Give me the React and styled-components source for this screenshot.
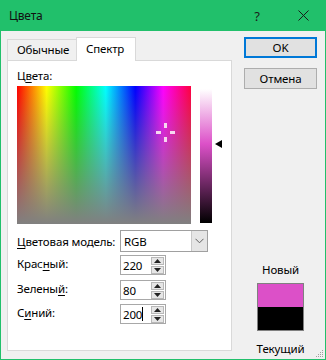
import styled, { createGlobalStyle } from "styled-components";

const GlobalStyle = createGlobalStyle`
  html, body {
    margin: 0;
    padding: 0;
    overflow: hidden;
  }
  * {
    box-sizing: border-box;
  }
`;

const ACCENT = "#21c06b";
const FONTE = `"Segoe UI", "Noto Sans", sans-serif`;
const COR = { r: 220, g: 80, b: 200 };
const corCss = `rgb(${COR.r}, ${COR.g}, ${COR.b})`;

function App() {
  // posição do marcador de luminância (0 = topo)
  const lum = (Math.max(COR.r, COR.g, COR.b) + Math.min(COR.r, COR.g, COR.b)) / 2 / 255;
  const lumTop = Math.round((1 - lum) * 134) - 4;

  return (
    <>
      <GlobalStyle />
      <Janela>
        <BarraTitulo>
          <Titulo>Цвета</Titulo>
          <BotaoTitulo>?</BotaoTitulo>
          <BotaoTitulo>
            <svg width="11" height="11" viewBox="0 0 11 11">
              <path d="M0.5 0.5 L10.5 10.5 M10.5 0.5 L0.5 10.5" stroke="#1a1a1a" strokeWidth="1" fill="none" />
            </svg>
          </BotaoTitulo>
        </BarraTitulo>
        <Corpo>
          <ColunaEsquerda>
            <Abas>
              <Aba>Обычные</Aba>
              <Aba $ativa>Спектр</Aba>
            </Abas>
            <Painel>
              <Rotulo>Ц<u>в</u>ета:</Rotulo>
              <Seletor>
                <Espectro>
                  <Mira width="19" height="19" viewBox="0 0 19 19">
                    <g fill="#f6d8f0">
                      <rect x="8" y="0" width="3" height="5" />
                      <rect x="8" y="14" width="3" height="5" />
                      <rect x="0" y="8" width="5" height="3" />
                      <rect x="14" y="8" width="5" height="3" />
                    </g>
                  </Mira>
                </Espectro>
                <BarraLum $cor={corCss}>
                  <Seta style={{ top: lumTop }} width="7" height="8" viewBox="0 0 7 8">
                    <path d="M0 4 L7 0 L7 8 Z" fill="#000" />
                  </Seta>
                </BarraLum>
              </Seletor>
              <Formulario>
                <Linha $topo={6}>
                  <RotuloCampo $centro><u>Ц</u>ветовая модель:</RotuloCampo>
                  <Lista>
                    <span>RGB</span>
                    <BotaoLista>
                      <svg width="9" height="6" viewBox="0 0 9 6">
                        <path d="M0.5 0.8 L4.5 4.8 L8.5 0.8" stroke="#606060" strokeWidth="1" fill="none" />
                      </svg>
                    </BotaoLista>
                  </Lista>
                </Linha>
                <Linha $topo={3}>
                  <RotuloCampo>Крас<u>н</u>ый:</RotuloCampo>
                  <CampoNumero valor="220" />
                </Linha>
                <Linha $topo={5}>
                  <RotuloCampo>Зелены<u>й</u>:</RotuloCampo>
                  <CampoNumero valor="80" />
                </Linha>
                <Linha $topo={4}>
                  <RotuloCampo>С<u>и</u>ний:</RotuloCampo>
                  <CampoNumero valor="200" cursor />
                </Linha>
              </Formulario>
            </Painel>
          </ColunaEsquerda>
          <ColunaDireita>
            <Botao $padrao>OK</Botao>
            <Botao>Отмена</Botao>
            <Amostras>
              <Texto>Новый</Texto>
              <Amostra>
                <Metade $cor={corCss} />
                <Metade $cor="#000" />
              </Amostra>
              <Texto $baixo>Текущий</Texto>
            </Amostras>
          </ColunaDireita>
        </Corpo>
        <Alca width="8" height="8" viewBox="0 0 8 8">
          <g fill="#a0a0a0">
            <rect x="6" y="0" width="1" height="1" />
            <rect x="4" y="2" width="1" height="1" />
            <rect x="6" y="2" width="1" height="1" />
            <rect x="2" y="4" width="1" height="1" />
            <rect x="4" y="4" width="1" height="1" />
            <rect x="6" y="4" width="1" height="1" />
            <rect x="0" y="6" width="1" height="1" />
            <rect x="2" y="6" width="1" height="1" />
            <rect x="4" y="6" width="1" height="1" />
            <rect x="6" y="6" width="1" height="1" />
          </g>
        </Alca>
      </Janela>
    </>
  );
}

function CampoNumero({ valor, cursor }) {
  return (
    <Numero>
      <ValorNumero>
        {valor}
        {cursor && <Cursor />}
      </ValorNumero>
      <Giro>
        <BotaoGiro>
          <svg width="7" height="4" viewBox="0 0 7 4">
            <path d="M0 4 L3.5 0 L7 4 Z" fill="#222" />
          </svg>
        </BotaoGiro>
        <BotaoGiro>
          <svg width="7" height="4" viewBox="0 0 7 4">
            <path d="M0 0 L3.5 4 L7 0 Z" fill="#222" />
          </svg>
        </BotaoGiro>
      </Giro>
    </Numero>
  );
}

const Janela = styled.div`
  position: relative;
  width: 326px;
  height: 360px;
  display: flex;
  flex-direction: column;
  background-color: #f0f0f0;
  border: 1px solid ${ACCENT};
  border-top: none;
  font-family: ${FONTE};
  font-size: 11.5px;
  letter-spacing: -0.15px;
  color: #000;
`;

const BarraTitulo = styled.div`
  height: 31px;
  display: flex;
  align-items: center;
  background-color: ${ACCENT};
  margin: 0 -1px;
  padding-left: 9px;
`;

const Titulo = styled.span`
  flex: 1;
  font-size: 12px;
  color: #111;
`;

const BotaoTitulo = styled.div`
  width: 46px;
  height: 31px;
  display: flex;
  align-items: center;
  justify-content: center;
  font-size: 13px;
  color: #1a1a1a;
`;

const Corpo = styled.div`
  flex: 1;
  display: flex;
  gap: 12px;
  padding: 0 8px 0 6px;
`;

const ColunaEsquerda = styled.div`
  width: 226px;
  display: flex;
  flex-direction: column;
  padding: 6px 0 8px;
`;

const Abas = styled.div`
  height: 23px;
  display: flex;
  align-items: flex-end;
  position: relative;
  z-index: 1;
`;

const Aba = styled.div`
  height: ${(p) => (p.$ativa ? "24px" : "21px")};
  width: ${(p) => (p.$ativa ? "60px" : "70px")};
  padding: ${(p) => (p.$ativa ? "3px 0 0 9px" : "2px 0 0 9px")};
  margin-bottom: ${(p) => (p.$ativa ? "-1px" : "0")};
  margin-left: ${(p) => (p.$ativa ? "-1px" : "0")};
  background-color: ${(p) => (p.$ativa ? "#fff" : "#f0f0f0")};
  border: 1px solid #d9d9d9;
  border-bottom: none;
  line-height: 16px;
  white-space: nowrap;
`;

const Painel = styled.div`
  flex: 1;
  background-color: #fff;
  border: 1px solid #d9d9d9;
  padding: 7px 9px 0 9px;
`;

const Rotulo = styled.div`
  line-height: 15px;
  height: 15px;
  u {
    text-underline-offset: 2px;
  }
`;

const Seletor = styled.div`
  display: flex;
  align-items: flex-start;
  gap: 9px;
  margin-top: 3px;
`;

const Espectro = styled.div`
  position: relative;
  width: 174px;
  height: 138px;
  background:
    linear-gradient(to bottom, rgba(128, 128, 128, 0) 0%, rgba(128, 128, 128, 1) 100%),
    linear-gradient(to right, #ff0000 0%, #ffff00 17%, #00ff00 34%, #00ffff 51%, #0000ff 68%, #ff00ff 84%, #ff0040 100%);
`;

const Mira = styled.svg`
  position: absolute;
  left: 139px;
  top: 37px;
`;

const BarraLum = styled.div`
  position: relative;
  width: 12px;
  height: 134px;
  margin-top: 3px;
  background: linear-gradient(to bottom, #ffffff 0%, ${(p) => p.$cor} 41%, #000000 100%);
`;

const Seta = styled.svg`
  position: absolute;
  left: 15px;
`;

const Formulario = styled.div`
  display: flex;
  flex-direction: column;
`;

const Linha = styled.div`
  display: flex;
  align-items: center;
  margin-top: ${(p) => p.$topo}px;
`;

const RotuloCampo = styled.div`
  width: 103px;
  line-height: 15px;
  margin-top: ${(p) => (p.$centro ? "0" : "-3px")};
  white-space: nowrap;
  u {
    text-underline-offset: 2px;
  }
`;

const Lista = styled.div`
  width: 88px;
  height: 22px;
  display: flex;
  align-items: center;
  border: 1px solid #a0a0a0;
  background-color: #fff;
  padding-left: 3px;
  span {
    flex: 1;
  }
`;

const BotaoLista = styled.div`
  width: 16px;
  height: 20px;
  display: flex;
  align-items: center;
  justify-content: center;
  background-color: #e5e5e5;
  border-left: 1px solid #c8c8c8;
`;

const Numero = styled.div`
  width: 46px;
  height: 20px;
  display: flex;
  align-items: center;
  border: 1px solid #a8a8a8;
  background-color: #fff;
  padding: 0 1px 0 2px;
`;

const ValorNumero = styled.div`
  flex: 1;
  display: flex;
  align-items: center;
  line-height: 15px;
`;

const Cursor = styled.span`
  display: inline-block;
  width: 1px;
  height: 14px;
  background-color: #000;
`;

const Giro = styled.div`
  display: flex;
  flex-direction: column;
  gap: 1px;
`;

const BotaoGiro = styled.div`
  width: 13px;
  height: 8px;
  display: flex;
  align-items: center;
  justify-content: center;
  background-color: #e6e6e6;
  border: 1px solid #b8b8b8;
`;

const ColunaDireita = styled.div`
  width: 73px;
  display: flex;
  flex-direction: column;
  align-items: center;
  padding: 6px 0 3px;
`;

const Botao = styled.button`
  width: 73px;
  height: 21px;
  margin-bottom: 10px;
  padding: 0;
  font-family: ${FONTE};
  font-size: 11.5px;
  letter-spacing: -0.15px;
  color: #000;
  background-color: #e1e1e1;
  border: ${(p) => (p.$padrao ? "2px solid #0078d7" : "1px solid #adadad")};
`;

const Amostras = styled.div`
  margin-top: auto;
  display: flex;
  flex-direction: column;
  align-items: center;
`;

const Texto = styled.div`
  line-height: 15px;
  margin-top: ${(p) => (p.$baixo ? "10px" : "0")};
  margin-bottom: ${(p) => (p.$baixo ? "0" : "6px")};
`;

const Amostra = styled.div`
  width: 47px;
  height: 48px;
  display: flex;
  flex-direction: column;
  border: 1px solid #808080;
`;

const Metade = styled.div`
  flex: 1;
  background-color: ${(p) => p.$cor};
`;

const Alca = styled.svg`
  position: absolute;
  right: 1px;
  bottom: 1px;
`;

export default App;
